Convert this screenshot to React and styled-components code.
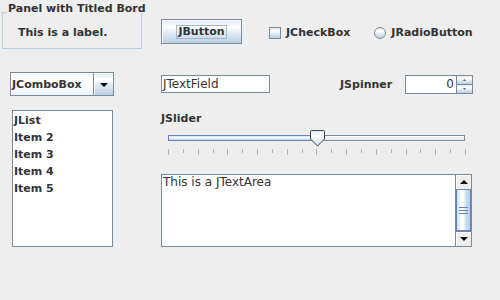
import styled, { createGlobalStyle } from "styled-components";

const GlobalStyle = createGlobalStyle`
  html, body {
    margin: 0;
    padding: 0;
    background: #eeeeee;
  }
  body {
    font-family: "DejaVu Sans", "Liberation Sans", sans-serif;
    color: #333333;
  }
`;

const buttonGradient = "linear-gradient(#dde8f3 0%, #ffffff 30%, #dde8f3 60%, #b8cfe5 100%)";
const sideGradient = "linear-gradient(90deg, #c8ddf2 0%, #ffffff 30%, #ffffff 50%, #c8ddf2 70%, #b8cfe5 100%)";

const ticks = Array.from({ length: 21 }, (_, i) => i);
const items = ["JList", "Item 2", "Item 3", "Item 4", "Item 5"];

export default function App() {
    return (
        <Page>
            <GlobalStyle />
            <Row $height={50}>
                <TitledPanel>
                    <TitleRow>
                        <TitleTick />
                        <Title>Panel with Titled Bord</Title>
                    </TitleRow>
                    <PanelBody>
                        <Bold>This is a label.</Bold>
                    </PanelBody>
                </TitledPanel>

                <Button>
                    <FocusLabel>JButton</FocusLabel>
                </Button>

                <Toggle $left={27}>
                    <CheckBox />
                    <Bold>JCheckBox</Bold>
                </Toggle>
                <Toggle $left={24}>
                    <Radio />
                    <Bold>JRadioButton</Bold>
                </Toggle>
            </Row>

            <Row $height={60}>
                <Combo>
                    <ComboText>JComboBox</ComboText>
                    <ComboArrow>
                        <svg width="8" height="4" viewBox="0 0 8 4">
                            <path d="M0 0 H8 L4 4 Z" fill="#000" />
                        </svg>
                    </ComboArrow>
                </Combo>

                <TextField>JTextField</TextField>

                <SpinnerLabel>JSpinner</SpinnerLabel>
                <Spinner>
                    <SpinnerValue>0</SpinnerValue>
                    <SpinnerButtons>
                        <SpinnerButton>
                            <svg width="3" height="2" viewBox="0 0 3 2">
                                <path d="M1.5 0 L3 2 H0 Z" fill="#666" />
                            </svg>
                        </SpinnerButton>
                        <SpinnerButton $bottom>
                            <svg width="3" height="2" viewBox="0 0 3 2">
                                <path d="M0 0 H3 L1.5 2 Z" fill="#666" />
                            </svg>
                        </SpinnerButton>
                    </SpinnerButtons>
                </Spinner>
            </Row>

            <Row $height={140}>
                <List>
                    {items.map((item) => (
                        <ListItem key={item}>{item}</ListItem>
                    ))}
                </List>

                <RightColumn>
                    <SliderLabel>JSlider</SliderLabel>
                    <Slider>
                        <Track>
                            <TrackFilled />
                            <TrackEmpty />
                            <Thumb>
                                <svg width="15" height="17" viewBox="0 0 15 17">
                                    <defs>
                                        <linearGradient id="thumbFill" x1="0" y1="0" x2="0" y2="1">
                                            <stop offset="0" stopColor="#dde8f3" />
                                            <stop offset="0.35" stopColor="#ffffff" />
                                            <stop offset="1" stopColor="#c8ddf2" />
                                        </linearGradient>
                                    </defs>
                                    <path
                                        d="M0.5 1.5 Q0.5 0.5 1.5 0.5 H13.5 Q14.5 0.5 14.5 1.5 V9 L7.5 16 L0.5 9 Z"
                                        fill="url(#thumbFill)"
                                        stroke="#444"
                                    />
                                </svg>
                            </Thumb>
                        </Track>
                        <Ticks>
                            {ticks.map((i) => (
                                <Tick key={i} $major={i % 2 === 0} />
                            ))}
                        </Ticks>
                    </Slider>

                    <TextArea>
                        <AreaText>This is a JTextArea</AreaText>
                        <ScrollBar>
                            <ScrollButton>
                                <svg width="8" height="4" viewBox="0 0 8 4">
                                    <path d="M4 0 L8 4 H0 Z" fill="#000" />
                                </svg>
                            </ScrollButton>
                            <ScrollThumb>
                                <Grip />
                                <Grip />
                                <Grip />
                            </ScrollThumb>
                            <ScrollButton $bottom>
                                <svg width="8" height="4" viewBox="0 0 8 4">
                                    <path d="M0 0 H8 L4 4 Z" fill="#000" />
                                </svg>
                            </ScrollButton>
                        </ScrollBar>
                    </TextArea>
                </RightColumn>
            </Row>
        </Page>
    );
}

const Page = styled.div`
    width: 500px;
    height: 300px;
    background: #eeeeee;
    display: flex;
    flex-direction: column;
    overflow: hidden;
`;

const Row = styled.div`
    display: flex;
    align-items: flex-start;
    height: ${(p) => p.$height}px;
    flex-shrink: 0;
`;

const Bold = styled.span`
    font-weight: bold;
    font-size: 11px;
    line-height: 13px;
    white-space: nowrap;
`;

const TitledPanel = styled.div`
    margin-left: 2px;
    width: 140px;
    display: flex;
    flex-direction: column;
`;

const TitleRow = styled.div`
    display: flex;
    align-items: flex-start;
    height: 13px;
`;

const TitleTick = styled.div`
    width: 5px;
    height: 1px;
    margin-top: 12px;
    background: #b8cfe5;
    flex-shrink: 0;
`;

const Title = styled(Bold)`
    margin-top: 2px;
    margin-left: 1px;
`;

const PanelBody = styled.div`
    box-sizing: border-box;
    height: 36px;
    border: 1px solid #b8cfe5;
    border-top: none;
    padding: 8px 0 0 15px;
`;

const Button = styled.div`
    box-sizing: border-box;
    margin: 19px 0 0 19px;
    width: 81px;
    height: 25px;
    border: 1px solid #7a8a99;
    box-shadow: inset 1px 1px 0 #ffffff;
    background: ${buttonGradient};
    display: flex;
    align-items: center;
    justify-content: center;
`;

const FocusLabel = styled(Bold)`
    border: 1px solid #a3b8cc;
    padding: 0 1px;
    line-height: 12px;
`;

const Toggle = styled.div`
    display: flex;
    align-items: center;
    gap: 5px;
    margin: 26px 0 0 ${(p) => p.$left}px;
    height: 13px;
`;

const CheckBox = styled.div`
    box-sizing: border-box;
    width: 12px;
    height: 12px;
    border: 1px solid #7a8a99;
    background: ${buttonGradient};
`;

const Radio = styled(CheckBox)`
    border-radius: 50%;
`;

const Combo = styled.div`
    box-sizing: border-box;
    margin: 22px 0 0 10px;
    width: 104px;
    height: 24px;
    border: 1px solid #7a8a99;
    display: flex;
`;

const ComboText = styled(Bold)`
    flex: 1;
    display: flex;
    align-items: center;
    padding-left: 1px;
    background: linear-gradient(#f4f7fa, #ffffff 40%, #eef3f8);
    box-shadow: inset 1px 1px 0 #ffffff;
`;

const ComboArrow = styled.div`
    width: 19px;
    border-left: 1px solid #7a8a99;
    background: ${buttonGradient};
    box-shadow: inset 1px 1px 0 #ffffff;
    display: flex;
    align-items: center;
    justify-content: center;
    padding-top: 1px;
`;

const TextField = styled.div`
    box-sizing: border-box;
    margin: 25px 0 0 47px;
    width: 109px;
    height: 18px;
    border: 1px solid #7a8a99;
    background: #ffffff;
    font-size: 12px;
    line-height: 16px;
    padding-left: 1px;
`;

const SpinnerLabel = styled(Bold)`
    margin: 25px 0 0 70px;
    width: 65px;
    height: 19px;
    display: flex;
    align-items: center;
`;

const Spinner = styled.div`
    box-sizing: border-box;
    margin-top: 25px;
    width: 68px;
    height: 19px;
    border: 1px solid #7a8a99;
    background: #ffffff;
    display: flex;
`;

const SpinnerValue = styled.div`
    flex: 1;
    text-align: right;
    font-size: 12px;
    line-height: 17px;
    padding-right: 2px;
`;

const SpinnerButtons = styled.div`
    width: 15px;
    border-left: 1px solid #7a8a99;
    display: flex;
    flex-direction: column;
`;

const SpinnerButton = styled.div`
    flex: 1;
    background: ${buttonGradient};
    border-top: ${(p) => (p.$bottom ? "1px solid #7a8a99" : "none")};
    display: flex;
    align-items: center;
    justify-content: center;
`;

const List = styled.div`
    box-sizing: border-box;
    margin-left: 12px;
    width: 101px;
    height: 137px;
    border: 1px solid #7a8a99;
    background: #ffffff;
    padding: 1px 0 0 1px;
`;

const ListItem = styled.div`
    font-weight: bold;
    font-size: 11px;
    line-height: 17px;
`;

const RightColumn = styled.div`
    margin-left: 48px;
    width: 311px;
    display: flex;
    flex-direction: column;
`;

const SliderLabel = styled(Bold)`
    margin-top: 2px;
`;

const Slider = styled.div`
    padding: 10px 7px 0 7px;
    height: 39px;
    box-sizing: border-box;
`;

const Track = styled.div`
    position: relative;
    display: flex;
    height: 6px;
`;

const TrackFilled = styled.div`
    box-sizing: border-box;
    width: 149px;
    border: 1px solid #6382bf;
    border-right: none;
    background: linear-gradient(#c8ddf2, #ffffff 40%, #b8cfe5);
`;

const TrackEmpty = styled.div`
    box-sizing: border-box;
    flex: 1;
    border: 1px solid #7a8a99;
    border-left: none;
    background: #eeeeee;
    box-shadow: inset 0 1px 0 #ffffff;
`;

const Thumb = styled.div`
    position: absolute;
    left: 142px;
    top: -5px;
    width: 15px;
    height: 17px;
    line-height: 0;
`;

const Ticks = styled.div`
    display: flex;
    justify-content: space-between;
    align-items: flex-start;
    margin-top: 8px;
    width: 298px;
`;

const Tick = styled.div`
    width: 1px;
    height: ${(p) => (p.$major ? 6 : 4)}px;
    background: #a3b8cc;
`;

const TextArea = styled.div`
    box-sizing: border-box;
    margin-top: 10px;
    width: 311px;
    height: 73px;
    border: 1px solid #7a8a99;
    background: #ffffff;
    display: flex;
`;

const AreaText = styled.div`
    flex: 1;
    font-size: 12px;
    line-height: 15px;
    padding-left: 1px;
`;

const ScrollBar = styled.div`
    width: 15px;
    border-left: 1px solid #7a8a99;
    background: #eeeeee;
    display: flex;
    flex-direction: column;
`;

const ScrollButton = styled.div`
    height: 15px;
    box-sizing: border-box;
    background: #eeeeee;
    box-shadow: inset 1px 1px 0 #ffffff;
    border-bottom: ${(p) => (p.$bottom ? "none" : "1px solid #7a8a99")};
    border-top: ${(p) => (p.$bottom ? "1px solid #7a8a99" : "none")};
    display: flex;
    align-items: center;
    justify-content: center;
`;

const ScrollThumb = styled.div`
    flex: 1;
    box-sizing: border-box;
    border: 1px solid #6382bf;
    border-top: none;
    background: ${sideGradient};
    display: flex;
    flex-direction: column;
    align-items: center;
    justify-content: center;
    gap: 2px;
`;

const Grip = styled.div`
    width: 9px;
    height: 1px;
    background: #6382bf;
`;
